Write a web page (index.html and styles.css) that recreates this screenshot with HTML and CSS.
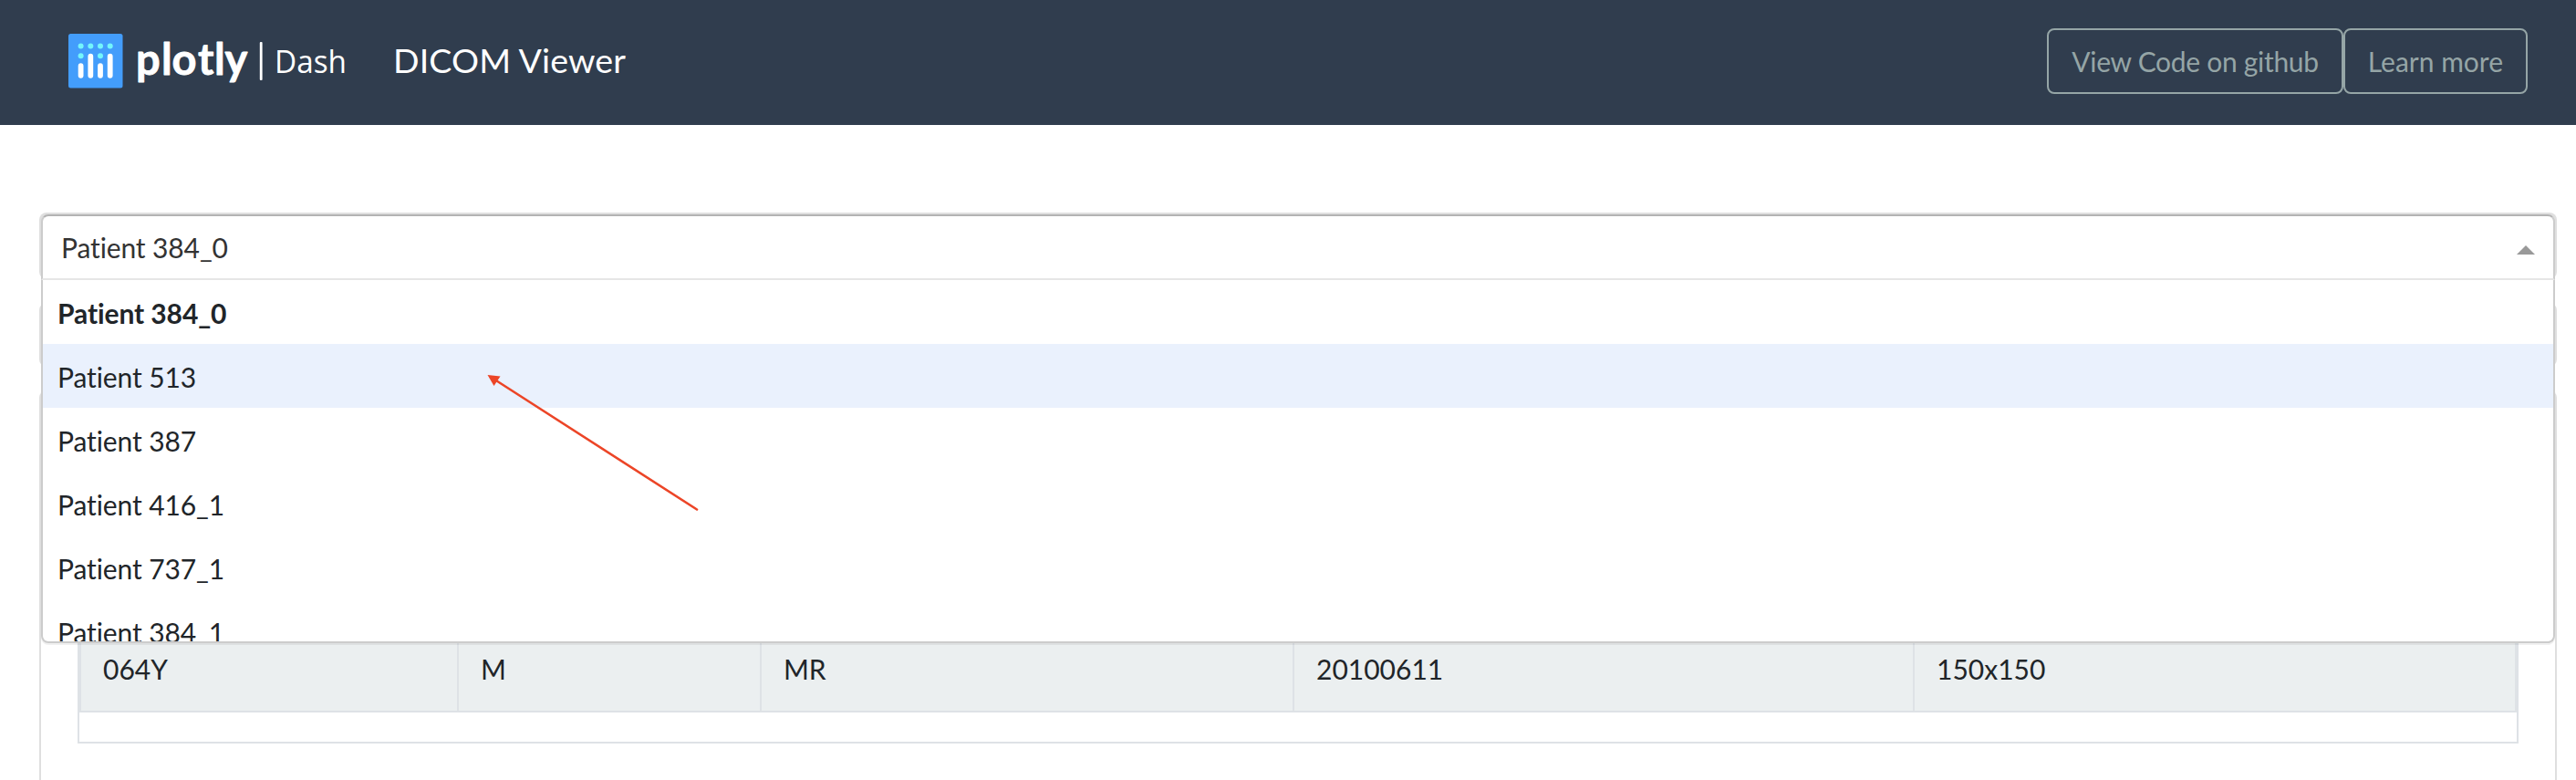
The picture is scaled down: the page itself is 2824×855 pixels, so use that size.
FILE: index.html
```html
<!DOCTYPE html>
<html lang="en">
<head>
<meta charset="utf-8">
<title>DICOM Viewer</title>
<link rel="stylesheet" href="styles.css">
</head>
<body>
<header class="navbar">
  <a class="brand">
    <svg class="logo" width="310" height="60" viewBox="0 0 310 60">
      <rect width="59.500" height="59.500" rx="2.500" fill="#439dfb"/>
      <g fill="#73f5fb">
        <circle cx="13.600" cy="13.500" r="3"/><circle cx="24.300" cy="13.500" r="3"/><circle cx="35" cy="13.500" r="3"/><circle cx="45.700" cy="13.500" r="3"/>
        <circle cx="13.600" cy="24.300" r="3"/><circle cx="35" cy="24.300" r="3"/>
      </g>
      <g stroke="#fff" stroke-width="5.800" stroke-linecap="round">
        <path d="M13.600 35.200V45.800M24.300 24.700V45.800M35 35.200V45.800M45.700 24.700V45.800"/>
      </g>
      <rect x="209.800" y="9" width="2.800" height="42" rx="1" fill="#fff"/>
      <text class="wordmark" x="74 102 113.500 142 160 171.500" y="44.500">plotly</text>
      <text class="product" x="226" y="43" textLength="79" lengthAdjust="spacingAndGlyphs">Dash</text>
    </svg>
    <span class="title">DICOM Viewer</span>
  </a>
  <nav class="actions"><a class="btn code">View Code on github</a><a class="btn">Learn more</a></nav>
</header>
<main class="content">
  <section class="select">
    <div class="control"><span>Patient 384_0</span><i class="caret"></i></div>
    <ul class="menu">
      <li class="selected">Patient 384_0</li>
      <li class="focused">Patient 513</li>
      <li>Patient 387</li>
      <li>Patient 416_1</li>
      <li>Patient 737_1</li>
      <li>Patient 384_1</li>
    </ul>
  </section>
  <section class="card bar"></section>
  <section class="card details">
    <div class="table-wrap">
      <table>
        <colgroup><col class="c1"><col class="c2"><col class="c3"><col class="c4"><col></colgroup>
        <tbody><tr><td>064Y</td><td>M</td><td>MR</td><td>20100611</td><td>150x150</td></tr></tbody>
      </table>
    </div>
  </section>
</main>
<svg class="arrow" width="240" height="160" viewBox="530 405 240 160">
  <path d="M543 416.500L764 558.500" stroke="#ec4527" stroke-width="2.600" stroke-linecap="round"/>
  <path d="M534.500 411L548.500 412.500L541.500 423Z" fill="#ec4527"/>
</svg>
</body>
</html>
```
FILE: styles.css
```css
* { box-sizing: border-box; }
body {
  display: flex;
  flex-direction: column;
  margin: 0;
  height: 855px;
  overflow: hidden;
  background: #fff;
  color: #212529;
  font: 30px/46px Lato, "Liberation Sans", sans-serif;
  font-variant-ligatures: none;
}
.navbar {
  display: flex;
  flex: none;
  justify-content: space-between;
  align-items: flex-start;
  height: 137px;
  padding: 31px 53px 0 75px;
  background: #303d4e;
}
.brand { display: flex; align-items: flex-start; margin-top: 6px; }
.logo { display: block; overflow: visible; }
.wordmark {
  font: 700 47px Lato, sans-serif;
  fill: #fff;
  stroke: #fff;
  stroke-width: .8;
  stroke-linejoin: round;
}
.product { font: 34px "Open Sans", sans-serif; fill: #fff; }
.title {
  margin: 1px 0 0 46px;
  font-size: 37.500px;
  line-height: 56px;
  letter-spacing: .15px;
  color: #fff;
}
.actions { display: flex; }
.btn {
  height: 72px;
  padding: 11px 25px;
  border: 2px solid #95a5a6;
  border-radius: 8px;
  line-height: 46px;
  color: #95a5a6;
  white-space: nowrap;
}
.code { letter-spacing: -.3px; }
.content {
  display: flex;
  flex: 1;
  flex-direction: column;
  gap: 26px;
  padding: 96px 21px 0 43px;
}
.select {
  position: relative;
  height: 73px;
  padding: 2px;
  border-radius: 8px;
  background: #dfdfdf;
}
.control {
  display: flex;
  justify-content: space-between;
  align-items: center;
  height: 72px;
  padding: 0 20px;
  border: 2px solid #ccc;
  border-top-color: #b3b3b3;
  border-bottom-color: #e6e6e6;
  border-radius: 8px 8px 0 0;
  background: #fff;
  color: #333;
  letter-spacing: -.12px;
}
.caret {
  margin-top: 5px;
  border: 10px solid transparent;
  border-top: 0;
  border-bottom-color: #999;
}
.menu {
  position: absolute;
  z-index: 1;
  top: 74px;
  left: 2px;
  right: 2px;
  height: 398px;
  margin: 0;
  padding: 0;
  overflow: hidden;
  list-style: none;
  border: 2px solid #ccc;
  border-top: 0;
  border-radius: 0 0 8px 8px;
  background: #fff;
  box-shadow: 0 2px 0 rgba(0, 0, 0, .06);
  letter-spacing: -.1px;
}
.menu li { height: 70px; padding: 13px 16px; }
.menu .selected { font-weight: 700; }
.menu .focused { background: #eaf1fd; }
.card { border: 2px solid #dfdfdf; border-radius: 8px; }
.bar { height: 70px; }
.details {
  flex: 1;
  padding: 0 40px;
  border-bottom: 0;
  border-radius: 8px 8px 0 0;
}
.table-wrap { height: 385px; border: 2px solid #dee2e6; }
table {
  width: 100%;
  height: 349px;
  table-layout: fixed;
  border-collapse: separate;
  border-spacing: 0;
}
td {
  padding: 0 24px 23px;
  border: 0 solid #dee2e6;
  border-width: 0 2px 2px 0;
  background: #ebeff0;
  vertical-align: bottom;
}
td:first-child { border-left-width: 2px; }
.c1 { width: 416px; }
.c2 { width: 332px; }
.c3 { width: 584px; }
.c4 { width: 680px; }
.arrow { position: absolute; z-index: 2; left: 530px; top: 405px; }
```
